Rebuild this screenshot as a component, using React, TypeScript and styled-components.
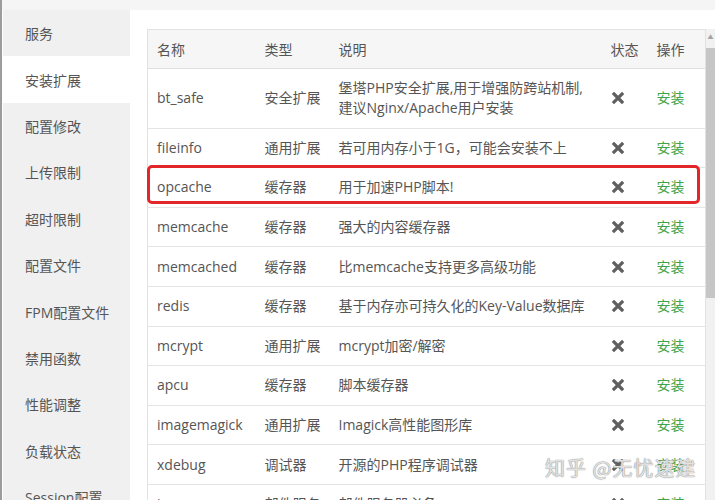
import React from "react";
import styled, { createGlobalStyle } from "styled-components";

const GlobalStyle = createGlobalStyle`
  html, body {
    margin: 0;
    padding: 0;
    background: #ffffff;
  }
  body {
    font-family: "Open Sans", "Noto Sans CJK SC", sans-serif;
    color: #555555;
  }
`;

type Ext = {
  name: string;
  type: string;
  desc: React.ReactNode;
};

const menu = [
  "服务",
  "安装扩展",
  "配置修改",
  "上传限制",
  "超时限制",
  "配置文件",
  "FPM配置文件",
  "禁用函数",
  "性能调整",
  "负载状态",
  "Session配置",
];

const exts: Ext[] = [
  {
    name: "bt_safe",
    type: "安全扩展",
    desc: (
      <>
        堡塔PHP安全扩展,用于增强防跨站机制,
        <br />
        建议Nginx/Apache用户安装
      </>
    ),
  },
  { name: "fileinfo", type: "通用扩展", desc: "若可用内存小于1G，可能会安装不上" },
  { name: "opcache", type: "缓存器", desc: "用于加速PHP脚本!" },
  { name: "memcache", type: "缓存器", desc: "强大的内容缓存器" },
  { name: "memcached", type: "缓存器", desc: "比memcache支持更多高级功能" },
  { name: "redis", type: "缓存器", desc: "基于内存亦可持久化的Key-Value数据库" },
  { name: "mcrypt", type: "通用扩展", desc: "mcrypt加密/解密" },
  { name: "apcu", type: "缓存器", desc: "脚本缓存器" },
  { name: "imagemagick", type: "通用扩展", desc: "Imagick高性能图形库" },
  { name: "xdebug", type: "调试器", desc: "开源的PHP程序调试器" },
  { name: "imap", type: "邮件服务", desc: "邮件服务器必备" },
];

function Cross(): JSX.Element {
  return (
    <CrossIcon viewBox="0 0 12 12" width="12" height="12">
      <path d="M2 2 L10 10 M10 2 L2 10" stroke="#5f5f5f" strokeWidth="3.2" strokeLinecap="square" />
    </CrossIcon>
  );
}

function App(): JSX.Element {
  return (
    <Page>
      <GlobalStyle />
      <TopStrip />
      <Main>
        <Sidebar>
          {menu.map((m) => (
            <MenuItem key={m} active={m === "安装扩展"}>
              {m}
            </MenuItem>
          ))}
        </Sidebar>
        <Content>
          <TableWrap>
            <TableBox>
              <Table>
                <colgroup>
                  <col style={{ width: 108 }} />
                  <col style={{ width: 74 }} />
                  <col style={{ width: 272 }} />
                  <col style={{ width: 46 }} />
                  <col style={{ width: 58 }} />
                </colgroup>
                <thead>
                  <tr>
                    <Th>名称</Th>
                    <Th>类型</Th>
                    <Th>说明</Th>
                    <Th>状态</Th>
                    <Th>操作</Th>
                  </tr>
                </thead>
                <tbody>
                  {exts.map((e) => (
                    <tr key={e.name}>
                      <Td>{e.name}</Td>
                      <Td>{e.type}</Td>
                      <Td>{e.desc}</Td>
                      <Td>
                        <Cross />
                      </Td>
                      <Td>
                        <InstallLink>安装</InstallLink>
                      </Td>
                    </tr>
                  ))}
                </tbody>
              </Table>
              <Highlight />
            </TableBox>
            <ScrollBar>
              <ScrollArrow>▲</ScrollArrow>
              <ScrollThumb />
            </ScrollBar>
          </TableWrap>
        </Content>
      </Main>
      <Watermark>知乎 @无忧速建</Watermark>
    </Page>
  );
}

const Page = styled.div`
  position: relative;
  width: 715px;
  height: 500px;
  overflow: hidden;
  display: flex;
  flex-direction: column;
  border-left: 2px solid #9c9c9c;
  box-sizing: border-box;
`;

const TopStrip = styled.div`
  height: 10px;
  flex-shrink: 0;
  background: #f5f5f5;
`;

const Main = styled.div`
  flex: 1;
  display: flex;
  min-height: 0;
`;

const Sidebar = styled.div`
  width: 127px;
  flex-shrink: 0;
  margin-left: 1px;
  background: #f0f0f0;
  display: flex;
  flex-direction: column;
`;

const MenuItem = styled.div<{ active?: boolean }>`
  height: 46.4px;
  flex-shrink: 0;
  display: flex;
  align-items: center;
  padding-left: 22px;
  font-size: 14px;
  color: #555555;
  background: ${(p) => (p.active ? "#ffffff" : "transparent")};
`;

const Content = styled.div`
  flex: 1;
  background: #ffffff;
  padding: 19px 0 0 17px;
  min-width: 0;
`;

const TableWrap = styled.div`
  display: flex;
  align-items: flex-start;
`;

const TableBox = styled.div`
  position: relative;
  width: 558px;
  flex-shrink: 0;
`;

const Table = styled.table`
  width: 558px;
  table-layout: fixed;
  border-collapse: collapse;
  border: 1px solid #e2e2e2;
  font-size: 14px;
`;

const Th = styled.th`
  text-align: left;
  font-weight: normal;
  color: #555555;
  background: #f6f6f6;
  height: 39px;
  padding: 0 9px;
  box-sizing: border-box;
  border-bottom: 1px solid #e0e0e0;
  white-space: nowrap;
`;

const Td = styled.td`
  padding: 9.3px 9px;
  line-height: 20px;
  color: #555555;
  border-bottom: 1px solid #e4e4e4;
  white-space: nowrap;
  overflow: hidden;
  vertical-align: middle;
`;

const CrossIcon = styled.svg`
  display: block;
  margin-left: 1px;
`;

const InstallLink = styled.span`
  color: #3fa447;
  cursor: pointer;
`;

const Highlight = styled.div`
  position: absolute;
  left: 0;
  top: 136px;
  width: 553px;
  height: 39px;
  border: 3px solid #e3262a;
  border-radius: 5px;
  box-sizing: border-box;
  pointer-events: none;
`;

const ScrollBar = styled.div`
  width: 10px;
  height: 480px;
  margin-left: 1px;
  background: #f1f1f1;
  display: flex;
  flex-direction: column;
  align-items: center;
`;

const ScrollArrow = styled.div`
  height: 17px;
  font-size: 6px;
  line-height: 17px;
  color: #a3a3a3;
`;

const ScrollThumb = styled.div`
  width: 9px;
  height: 250px;
  margin-top: 2px;
  background: #c6c6c6;
`;

const Watermark = styled.div`
  position: absolute;
  left: 543px;
  top: 453px;
  font-family: "Noto Sans CJK SC", sans-serif;
  font-size: 20px;
  letter-spacing: 1px;
  color: rgba(255, 255, 255, 0.75);
  text-shadow: 0 0 1px #8a8a8a, 0 0 1px #8a8a8a;
  white-space: nowrap;
  pointer-events: none;
`;

export default App;
